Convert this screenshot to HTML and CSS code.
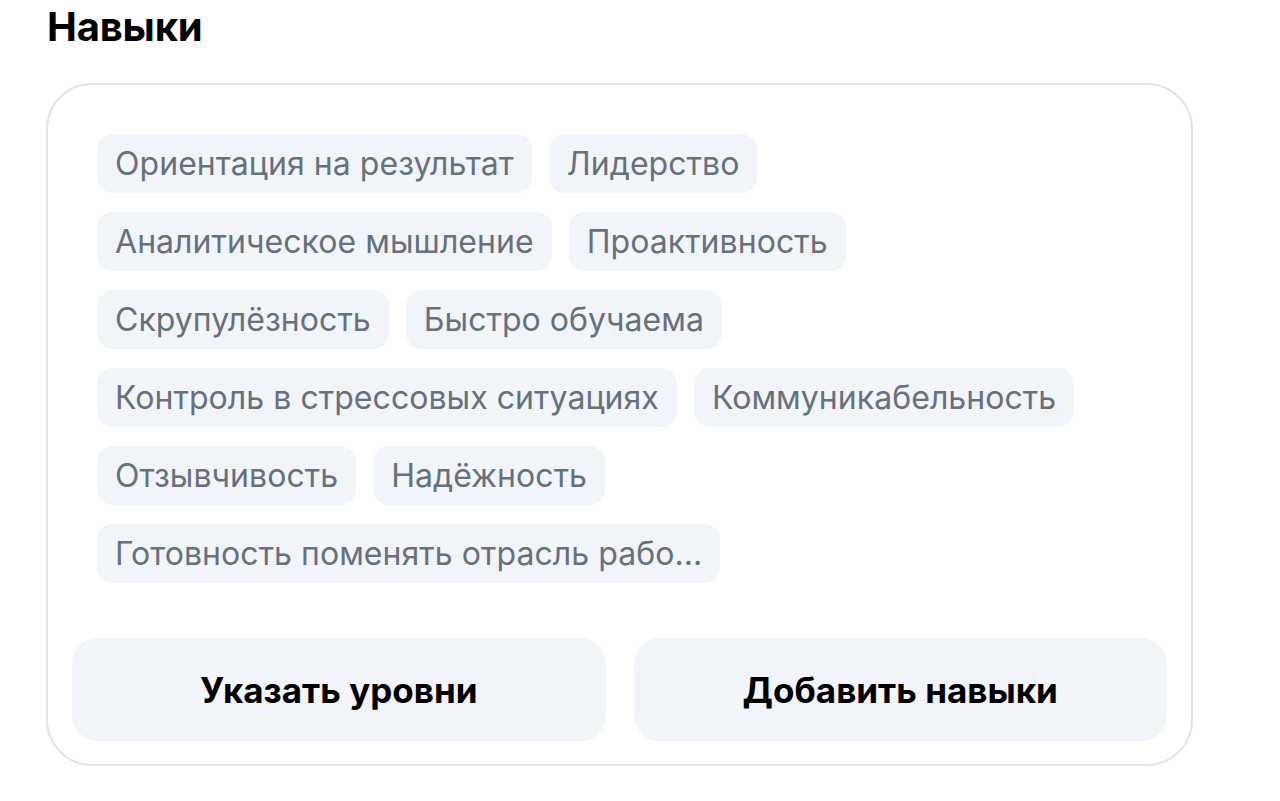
FILE: index.html
```html
<!DOCTYPE html>
<html lang="ru">
<head>
<meta charset="utf-8">
<link rel="stylesheet" href="styles.css">
</head>
<body>
<section class="skills">
  <h2 class="skills-title">Навыки</h2>
  <div class="card">
    <ul class="chips">
      <li class="chip">Ориентация на результат</li>
      <li class="chip">Лидерство</li>
      <li class="chip">Аналитическое мышление</li>
      <li class="chip">Проактивность</li>
      <li class="chip">Скрупулёзность</li>
      <li class="chip">Быстро обучаема</li>
      <li class="chip">Контроль в стрессовых ситуациях</li>
      <li class="chip">Коммуникабельность</li>
      <li class="chip">Отзывчивость</li>
      <li class="chip">Надёжность</li>
      <li class="chip">Готовность поменять отрасль рабо...</li>
    </ul>
    <div class="actions">
      <button class="btn">Указать уровни</button>
      <button class="btn">Добавить навыки</button>
    </div>
  </div>
</section>
</body>
</html>
```
FILE: styles.css
```css
* { box-sizing: border-box; }
html, body { margin: 0; padding: 0; background: #fff; }
body {
  font-family: Inter, "Noto Sans", sans-serif;
  color: #000;
}
.skills {
  width: 1147px;
  margin-left: 46px;
  padding-top: 4px;
}
.skills-title {
  margin: 0 0 0 1px;
  font-size: 40px;
  line-height: 46px;
  font-weight: 700;
  letter-spacing: -0.2px;
}
.card {
  margin-top: 33px;
  border: 2px solid #e1e5ea;
  border-radius: 46px;
  padding: 49px 24px 23px 24px;
}
.chips {
  list-style: none;
  margin: 0;
  padding: 0 60px 0 25px;
  display: flex;
  flex-wrap: wrap;
  gap: 19px 17px;
}
.chip {
  background: #f1f4f8;
  border-radius: 16px;
  height: 59px;
  padding: 0 18px;
  display: flex;
  align-items: center;
  font-size: 32px;
  letter-spacing: 0.05px;
  color: #66717c;
  white-space: nowrap;
}
.actions {
  margin-top: 55px;
  display: flex;
  gap: 28px;
}
.btn {
  flex: 1;
  height: 103px;
  border: 0;
  border-radius: 26px;
  background: #f1f4f8;
  font-family: inherit;
  font-size: 35px;
  font-weight: 700;
  color: #000;
}
```
